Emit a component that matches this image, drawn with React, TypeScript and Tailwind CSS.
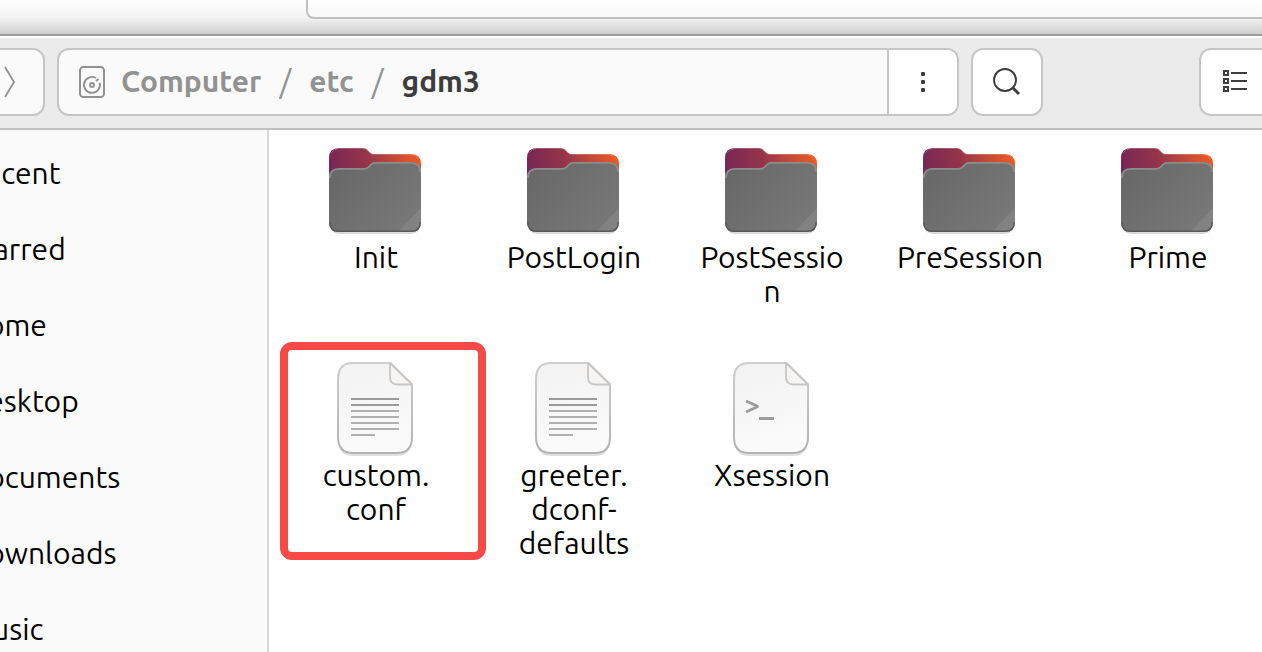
import React from 'react';

type FileKind = 'folder' | 'text' | 'script';

type FileItemProps = {
  lines: string[];
  kind: FileKind;
  highlighted?: boolean;
};

const places = ['Recent', 'Starred', 'Home', 'Desktop', 'Documents', 'Downloads', 'Music'];

const files: FileItemProps[] = [
  { lines: ['Init'], kind: 'folder' },
  { lines: ['PostLogin'], kind: 'folder' },
  { lines: ['PostSessio', 'n'], kind: 'folder' },
  { lines: ['PreSession'], kind: 'folder' },
  { lines: ['Prime'], kind: 'folder' },
  { lines: ['custom.', 'conf'], kind: 'text', highlighted: true },
  { lines: ['greeter.', 'dconf-', 'defaults'], kind: 'text' },
  { lines: ['Xsession'], kind: 'script' },
];

const FolderIcon = () => (
  <svg viewBox="0 0 96 96" className="size-24" aria-hidden="true">
    <defs>
      <linearGradient id="folder-back" x1="2" y1="34" x2="94" y2="14" gradientUnits="userSpaceOnUse">
        <stop offset="0" stopColor="#762556" />
        <stop offset="0.42" stopColor="#94344a" />
        <stop offset="0.7" stopColor="#c04a38" />
        <stop offset="1" stopColor="#f05a24" />
      </linearGradient>
      <linearGradient id="folder-front" x1="10" y1="25" x2="86" y2="89" gradientUnits="userSpaceOnUse">
        <stop offset="0" stopColor="#686868" />
        <stop offset="1" stopColor="#797979" />
      </linearGradient>
      <clipPath id="folder-clip">
        <path d="M2 35q0-10 10-10h25q2.500 0 4-1.500l3-3q1.500-1.500 4-1.500h36q10 0 10 10v50q0 10-10 10H12q-10 0-10-10z" />
      </clipPath>
    </defs>
    <path d="M3 40v41q0 10 10 10h70q10 0 10-10V40z" fill="#000" opacity="0.14" />
    <path d="M2 15Q2 5 12 5h24q2.500 0 4 1.500l3 3q1.500 1.500 4 1.500h37q10 0 10 10v30H2z" fill="url(#folder-back)" />
    <path d="M4 10q3-4.500 8-4.500h24q2.500 0 4 1.500l3 3q1.500 1.500 4 1.500h37q5 0 8 4" fill="none" stroke="#fff" strokeOpacity="0.2" />
    <g clipPath="url(#folder-clip)">
      <rect x="2" y="18" width="92" height="72" fill="url(#folder-front)" />
      <path d="M94 65L71 89h23z" fill="#fff" opacity="0.08" />
      <path d="M2 35q0-10 10-10h25q2.500 0 4-1.500l3-3q1.500-1.500 4-1.500h36q10 0 10 10" fill="none" stroke="#8c8c8c" strokeWidth="3.500" />
      <path d="M2 79q0 10 10 10h72q10 0 10-10" fill="none" stroke="#585858" strokeWidth="3" />
    </g>
  </svg>
);

const PaperIcon = ({ kind }: { kind: FileKind }) => (
  <svg viewBox="0 0 96 96" className="size-24" aria-hidden="true">
    <defs>
      <linearGradient id="paper-fill" x1="20" y1="0" x2="48" y2="93" gradientUnits="userSpaceOnUse">
        <stop offset="0" stopColor="#f2f2f2" />
        <stop offset="1" stopColor="#fbfbfb" />
      </linearGradient>
      <linearGradient id="paper-stroke" x1="0" y1="0" x2="0" y2="93" gradientUnits="userSpaceOnUse">
        <stop offset="0" stopColor="#cfcfcf" />
        <stop offset="1" stopColor="#b2b2b2" />
      </linearGradient>
    </defs>
    <path d="M12 70v8q0 16 14 16h44q14 0 14-16v-8" fill="none" stroke="#000" strokeOpacity="0.12" strokeWidth="2" />
    <path
      d="M63.500 2H26Q11 2 11 18v58q0 16 15 16h44q15 0 15-16V23.500z"
      fill="url(#paper-fill)"
      stroke="url(#paper-stroke)"
      strokeWidth="2"
      strokeLinejoin="round"
    />
    <path d="M63 2v14q0 7.500 7.500 7.500h14.500z" fill="#f6f5f4" stroke="#c6c6c6" strokeWidth="1.800" strokeLinejoin="round" />
    {kind === 'text' && (
      <>
        <path d="M24 38h48M24 44h48" stroke="#9b9b9b" strokeWidth="2" />
        <path d="M24 50h48M24 56h48M24 62h48M24 68h48M24 74h24" stroke="#b0b0b0" strokeWidth="2" />
      </>
    )}
    {kind === 'script' && (
      <path d="M23 40l12 5.500-12 5.500M36 57.500h15" fill="none" stroke="#9c9c9c" strokeWidth="2.800" strokeLinejoin="bevel" />
    )}
  </svg>
);

const FileItem = ({ lines, kind, highlighted }: FileItemProps) => (
  <li className="relative flex w-40 flex-col items-center gap-px">
    {highlighted && (
      <span className="pointer-events-none absolute -top-[19px] -left-[15px] h-[218px] w-[206px] rounded-xl border-8 border-[#f74a46]" />
    )}
    {kind === 'folder' ? <FolderIcon /> : <PaperIcon kind={kind} />}
    <span className="pl-0.5 text-center text-[30px] leading-[34px] whitespace-nowrap">
      {lines.map((line) => (
        <span key={line} className="block">{line}</span>
      ))}
    </span>
  </li>
);

const DiskIcon = () => (
  <svg viewBox="0 0 26 32" className="h-8 w-[26px] shrink-0" fill="none" stroke="currentColor" strokeWidth="2" aria-hidden="true">
    <rect x="1" y="1" width="24" height="30" rx="3.500" />
    <path d="M17 12A8 8 0 1 0 20.700 16.800" strokeWidth="1.900" />
    <circle cx="13" cy="19" r="2" />
    <path d="M17 15l2.500-2" />
  </svg>
);

const Separator = () => <span className="px-0.5 text-[32px] font-normal">/</span>;

export default function App() {
  return (
    <div className="flex h-screen flex-col overflow-hidden bg-white font-['Ubuntu','Noto_Sans',sans-serif] text-black">
      {/* Bottom edge of the window behind */}
      <div className="flex h-9 shrink-0 items-start border-b-2 border-[#9b9b9b] bg-linear-to-b from-white via-[#f4f4f4] to-[#cecece]">
        <div className="ml-[306px] h-[19px] flex-1 rounded-bl-lg border-b-2 border-l-2 border-[#c0c0c0] bg-linear-to-b from-white to-[#f8f8f8]" />
      </div>

      {/* Header bar */}
      <header className="flex shrink-0 items-center border-t-2 border-b-2 border-t-white border-b-[#c0c0c0] bg-[#ebebeb] pt-2.5 pb-3 text-[#3d3d3d]">
        <button
          type="button"
          aria-label="Forward"
          className="flex h-[68px] w-[45px] items-center rounded-r-xl border-y-2 border-r-2 border-[#c6c6c6] bg-[#fafafa] pl-1 text-[#929292]"
        >
          <svg viewBox="0 0 12 32" className="h-8 w-3" fill="none" stroke="currentColor" strokeWidth="1.800" aria-hidden="true">
            <path d="M1 1l9 15-9 15" />
          </svg>
        </button>

        <nav
          aria-label="Location"
          className="ml-3 flex h-[68px] flex-1 items-stretch overflow-hidden rounded-xl border-2 border-[#c6c6c6] bg-[#fafafa]"
        >
          <div className="flex flex-1 items-center gap-4 pl-5 text-[30px] leading-8 font-bold text-[#929292]">
            <DiskIcon />
            <div className="flex items-center gap-4 pb-0.5">
              <a href="#computer">Computer</a>
              <Separator />
              <a href="#etc">etc</a>
              <Separator />
              <a href="#gdm3" aria-current="page" className="text-[#3d3d3d]">gdm3</a>
            </div>
          </div>
          <button type="button" aria-label="Folder menu" className="flex w-[70px] items-center justify-center border-l-2 border-[#c6c6c6] bg-white">
            <svg viewBox="0 0 4 20" className="h-5 w-1" fill="currentColor" aria-hidden="true">
              <rect width="4" height="4" rx="1" />
              <rect y="8" width="4" height="4" rx="1" />
              <rect y="16" width="4" height="4" rx="1" />
            </svg>
          </button>
        </nav>

        <button
          type="button"
          aria-label="Search"
          className="mr-39 ml-3 flex h-[68px] w-[72px] items-center justify-center rounded-xl border-2 border-[#c6c6c6] bg-white"
        >
          <svg viewBox="0 0 28 28" className="size-7" fill="none" stroke="currentColor" aria-hidden="true">
            <circle cx="12" cy="12" r="11" strokeWidth="1.900" />
            <path d="M20 20l6 6" strokeWidth="3" />
          </svg>
        </button>

        <button
          type="button"
          aria-label="List view"
          className="flex h-[68px] w-[63px] items-center rounded-l-xl border-y-2 border-l-2 border-[#c6c6c6] bg-white pl-[22px]"
        >
          <svg viewBox="0 0 24 24" className="size-6" fill="none" stroke="currentColor" strokeWidth="2" aria-hidden="true">
            <path d="M1 1h4v4H1zM1 9h4v4H1zM1 17h4v4H1zM8 3h16M8 11h16M8 19h16" />
          </svg>
        </button>
      </header>

      <div className="flex min-h-0 flex-1">
        {/* Sidebar, scrolled past its icons */}
        <aside className="w-[269px] shrink-0 overflow-hidden border-r-2 border-[#d8d8d8] bg-[#fafafa] pt-[5px]">
          <ul className="-ml-[34px]">
            {places.map((place) => (
              <li key={place}>
                <a href={`#${place.toLowerCase()}`} className="flex h-[76px] items-center text-[30px]">{place}</a>
              </li>
            ))}
          </ul>
        </aside>

        <main className="flex-1 overflow-hidden pt-[13px] pl-[26px]">
          <ul className="flex flex-wrap gap-x-[38px] gap-y-[53px]">
            {files.map((file) => (
              <FileItem key={file.lines.join('')} {...file} />
            ))}
          </ul>
        </main>
      </div>
    </div>
  );
}
